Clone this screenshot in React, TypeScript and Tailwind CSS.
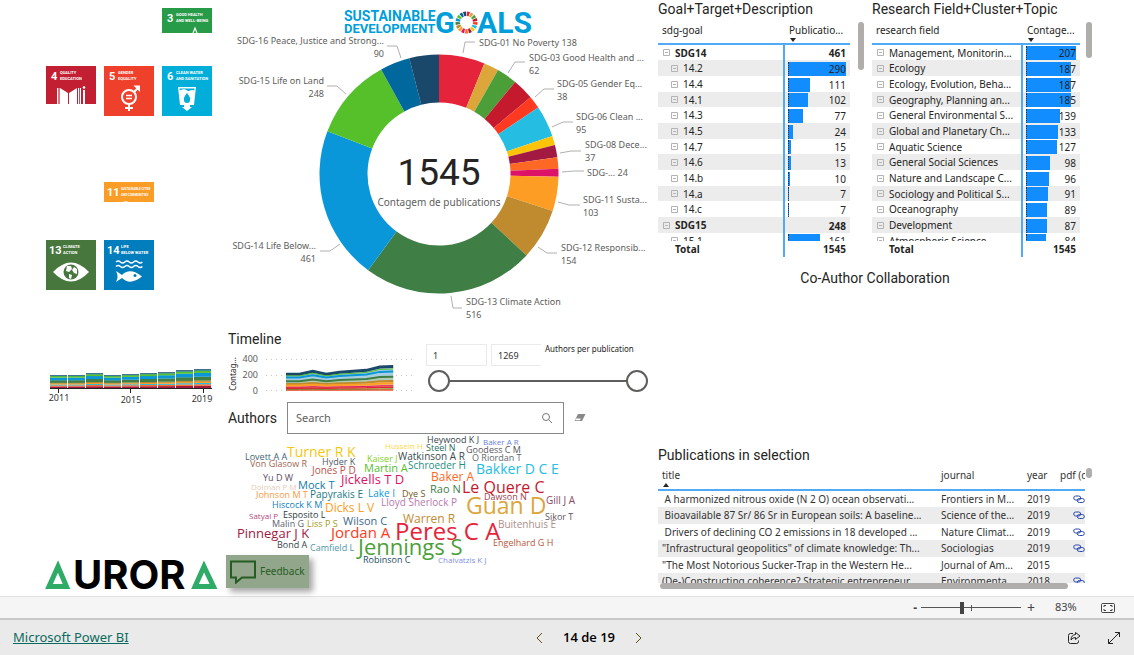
import { useState } from 'react';
import type { ReactNode } from 'react';

interface Slice {
    goal: string;
    value: number;
    color: string;
}

interface Callout {
    x: number;
    y: number;
    anchor: 'start' | 'end';
    lines: string[];
    leader: string;
}

interface FieldRow {
    name: string;
    value: number;
    group?: boolean;
    child?: boolean;
}

interface Publication {
    title: string;
    journal: string;
    year: number;
    pdf: boolean;
}

type Word = [text: string, x: number, y: number, size: number, color: string];

const SLICES: Slice[] = [
    { goal: 'SDG-01', value: 138, color: '#e5243b' },
    { goal: 'SDG-02', value: 45, color: '#dda63a' },
    { goal: 'SDG-03', value: 62, color: '#4c9f38' },
    { goal: 'SDG-04', value: 64, color: '#c5192d' },
    { goal: 'SDG-05', value: 38, color: '#ff3a21' },
    { goal: 'SDG-06', value: 95, color: '#26bde2' },
    { goal: 'SDG-07', value: 28, color: '#fcc30b' },
    { goal: 'SDG-08', value: 37, color: '#a21942' },
    { goal: 'SDG-09', value: 34, color: '#fd6925' },
    { goal: 'SDG-10', value: 24, color: '#dd1367' },
    { goal: 'SDG-11', value: 103, color: '#fd9d24' },
    { goal: 'SDG-12', value: 154, color: '#bf8b2e' },
    { goal: 'SDG-13', value: 516, color: '#3f7e44' },
    { goal: 'SDG-14', value: 461, color: '#0a97d9' },
    { goal: 'SDG-15', value: 248, color: '#56c02b' },
    { goal: 'SDG-16', value: 90, color: '#00689d' },
    { goal: 'SDG-17', value: 89, color: '#19486a' },
];

const CALLOUTS: Callout[] = [
    { x: 384, y: 44, anchor: 'end', lines: ['SDG-16 Peace, Justice and Strong...', '90'], leader: '387,46 397,46 401,58' },
    { x: 324, y: 84, anchor: 'end', lines: ['SDG-15 Life on Land', '248'], leader: '327,86 337,86 346,94' },
    { x: 316, y: 249, anchor: 'end', lines: ['SDG-14 Life Below...', '461'], leader: '320,251 330,251 340,244' },
    { x: 479, y: 46, anchor: 'start', lines: ['SDG-01 No Poverty 138'], leader: '475,42 465,42 463,53' },
    { x: 529, y: 61, anchor: 'start', lines: ['SDG-03 Good Health and ...', '62'], leader: '525,62 515,62 508,73' },
    { x: 557, y: 87, anchor: 'start', lines: ['SDG-05 Gender Eq...', '38'], leader: '554,89 544,89 535,97' },
    { x: 576, y: 120, anchor: 'start', lines: ['SDG-06 Clean ...', '95'], leader: '573,122 563,122 552,127' },
    { x: 585, y: 148, anchor: 'start', lines: ['SDG-08 Dece...', '37'], leader: '581,151 571,151 560,153' },
    { x: 587, y: 176, anchor: 'start', lines: ['SDG-... 24'], leader: '584,171 574,171 562,172' },
    { x: 583, y: 203, anchor: 'start', lines: ['SDG-11 Susta...', '103'], leader: '580,205 569,205 558,202' },
    { x: 561, y: 251, anchor: 'start', lines: ['SDG-12 Responsib...', '154'], leader: '557,253 547,253 538,247' },
    { x: 466, y: 305, anchor: 'start', lines: ['SDG-13 Climate Action', '516'], leader: '462,308 453,308 451,296' },
];

const TARGETS: FieldRow[] = [
    { name: 'SDG14', value: 461, group: true },
    { name: '14.2', value: 290, child: true },
    { name: '14.4', value: 111, child: true },
    { name: '14.1', value: 102, child: true },
    { name: '14.3', value: 77, child: true },
    { name: '14.5', value: 24, child: true },
    { name: '14.7', value: 15, child: true },
    { name: '14.6', value: 13, child: true },
    { name: '14.b', value: 10, child: true },
    { name: '14.a', value: 7, child: true },
    { name: '14.c', value: 7, child: true },
    { name: 'SDG15', value: 248, group: true },
    { name: '15.1', value: 161, child: true },
];

const FIELDS: FieldRow[] = [
    { name: 'Management, Monitorin...', value: 207 },
    { name: 'Ecology', value: 187 },
    { name: 'Ecology, Evolution, Beha...', value: 187 },
    { name: 'Geography, Planning an...', value: 185 },
    { name: 'General Environmental S...', value: 139 },
    { name: 'Global and Planetary Ch...', value: 133 },
    { name: 'Aquatic Science', value: 127 },
    { name: 'General Social Sciences', value: 98 },
    { name: 'Nature and Landscape C...', value: 96 },
    { name: 'Sociology and Political S...', value: 91 },
    { name: 'Oceanography', value: 89 },
    { name: 'Development', value: 87 },
    { name: 'Atmospheric Science', value: 84 },
];

const PUBLICATIONS: Publication[] = [
    { title: ' A harmonized nitrous oxide (N 2 O) ocean observati...', journal: 'Frontiers in M...', year: 2019, pdf: true },
    { title: ' Bioavailable 87 Sr/ 86 Sr in European soils: A baseline...', journal: 'Science of the...', year: 2019, pdf: true },
    { title: ' Drivers of declining CO 2 emissions in 18 developed ...', journal: 'Nature Climat...', year: 2019, pdf: true },
    { title: '"Infrastructural geopolitics" of climate knowledge: Th...', journal: 'Sociologias', year: 2019, pdf: true },
    { title: '"The Most Notorious Sucker-Trap in the Western He...', journal: 'Journal of Am...', year: 2015, pdf: false },
    { title: '(De-)Constructing coherence? Strategic entrepreneur...', journal: 'Environmenta...', year: 2018, pdf: true },
];

const WORDS: Word[] = [
    ['Heywood K J', 427, 443, 9, '#374649'],
    ['Baker A R', 483, 445, 8, '#6b7fdc'],
    ['Hussein H', 385, 449, 8, '#fbd94a'],
    ['Steel N', 426, 451, 9, '#1f6f63'],
    ['Goodess C M', 466, 453, 9, '#5a5560'],
    ['Turner R K', 287, 457, 14, '#f2c80f'],
    ['Lovett A A', 245, 460, 9, '#3f6472'],
    ['Watkinson A R', 398, 460, 10, '#3c4b4e'],
    ['O Riordan T', 472, 461, 9, '#5f6b6d'],
    ['Kaiser J', 367, 462, 9, '#7ed321'],
    ['Von Glasow R', 250, 467, 9, '#a0664f'],
    ['Hyder K', 322, 465, 9, '#4e5a66'],
    ['Jones P D', 312, 474, 10, '#c0504d'],
    ['Martin A', 364, 472, 11, '#56c02b'],
    ['Schroeder H', 408, 469, 10, '#1f8f80'],
    ['Bakker D C E', 476, 474, 14, '#26bde2'],
    ['Jickells T D', 341, 484, 13, '#dd1367'],
    ['Baker A', 431, 481, 12, '#fd6925'],
    ['Yu D W', 263, 481, 9, '#5d4a66'],
    ['Dolman P M', 251, 490, 8, '#e6cdb8'],
    ['Mock T', 298, 489, 11, '#117aa8'],
    ['Rao N', 430, 493, 11, '#3f7e44'],
    ['Le Quere C', 462, 493, 16, '#c5192d'],
    ['Johnson M T', 256, 498, 9, '#f79a45'],
    ['Papyrakis E', 310, 498, 10, '#1b7a86'],
    ['Lake I', 368, 497, 10, '#0a97d9'],
    ['Dye S', 402, 497, 9, '#6f5a1c'],
    ['Dawson N', 484, 500, 9, '#9c4350'],
    ['Lloyd Sherlock P', 381, 506, 10, '#b878b0'],
    ['Guan D', 466, 514, 23, '#dda63a'],
    ['Gill J A', 546, 504, 10, '#8b4a68'],
    ['Hiscock K M', 272, 508, 9, '#147fc4'],
    ['Dicks L V', 325, 512, 12, '#fd9d24'],
    ['Sikor T', 545, 520, 9, '#5e5560'],
    ['Satyal P', 249, 519, 8, '#b3467a'],
    ['Esposito L', 283, 518, 9, '#2c3a3d'],
    ['Wilson C', 343, 525, 11, '#3d6a8a'],
    ['Warren R', 403, 523, 12, '#bf8b2e'],
    ['Malin G', 272, 527, 9, '#5c6470'],
    ['Liss P S', 307, 527, 9, '#a89a15'],
    ['Buitenhuis E', 498, 528, 10, '#ad8f8a'],
    ['Pinnegar J K', 237, 538, 13, '#a21942'],
    ['Jordan A', 331, 538, 15, '#ff3a21'],
    ['Peres C A', 395, 540, 24, '#e5243b'],
    ['Bond A', 277, 548, 9, '#374649'],
    ['Camfield L', 310, 551, 9, '#4f97a8'],
    ['Jennings S', 358, 555, 22, '#4c9f38'],
    ['Engelhard G H', 493, 546, 9, '#b8563c'],
    ['Robinson C', 363, 563, 9, '#1d4e66'],
    ['Chalvatzis K J', 438, 563, 8, '#7f8fe6'],
];

// Distance above the axis for the nine years, 2011 to 2019
const BAR_HEIGHTS = [13, 13, 15, 13, 14, 15, 16, 18, 19];

const BAR_LAYERS = [
    { from: 0, to: 0.12, color: '#a21942' },
    { from: 0.12, to: 0.2, color: '#fd6925' },
    { from: 0.2, to: 0.27, color: '#26bde2' },
    { from: 0.27, to: 0.33, color: '#fd9d24' },
    { from: 0.33, to: 0.4, color: '#bf8b2e' },
    { from: 0.4, to: 0.6, color: '#3f7e44' },
    { from: 0.6, to: 0.8, color: '#0a97d9' },
    { from: 0.8, to: 0.92, color: '#56c02b' },
    { from: 0.92, to: 0.97, color: '#00689d' },
    { from: 0.97, to: 1, color: '#19486a' },
];

const TIMELINE_TOPS = [17, 17, 20, 17, 19, 20, 21, 24.5, 25];

const TIMELINE_LAYERS = [
    { at: 0.96, color: '#19486a', width: 3 },
    { at: 0.86, color: '#56c02b', width: 1 },
    { at: 0.76, color: '#0a97d9', width: 2 },
    { at: 0.55, color: '#3f7e44', width: 2 },
    { at: 0.38, color: '#bf8b2e', width: 2 },
    { at: 0.29, color: '#fd9d24', width: 2 },
    { at: 0.19, color: '#dd1367', width: 1 },
    { at: 0.13, color: '#e5243b', width: 1.5 },
    { at: 0.06, color: '#4c9f38', width: 1 },
    { at: 0.02, color: '#ff3a21', width: 1 },
];

const ringPath = (cx: number, cy: number, outer: number, inner: number, start: number, end: number): string => {
    const point = (radius: number, angle: number) =>
        `${(cx + radius * Math.sin(angle)).toFixed(2)},${(cy - radius * Math.cos(angle)).toFixed(2)}`;
    const large = end - start > Math.PI ? 1 : 0;
    return `M${point(outer, start)} A${outer},${outer} 0 ${large} 1 ${point(outer, end)} L${point(inner, end)} A${inner},${inner} 0 ${large} 0 ${point(inner, start)} Z`;
};

const donutPaths = () => {
    const total = SLICES.reduce((sum, slice) => sum + slice.value, 0);
    let angle = 0;
    return SLICES.map((slice) => {
        const start = angle;
        angle += (slice.value / total) * Math.PI * 2;
        return { ...slice, d: ringPath(439, 174, 119.5, 71.5, start, angle) };
    });
};

const PanelTitle = ({ children }: { children: ReactNode }) => (
    <h2 className="font-['Roboto',sans-serif] text-sm leading-[18px] whitespace-nowrap text-[#252423]">{children}</h2>
);

interface TileProps {
    number: string;
    lines: string[];
    color: string;
    height: number;
    className: string;
    lineSize?: number;
    children?: ReactNode;
}

const GoalTile = ({ number, lines, color, height, className, lineSize = 4, children }: TileProps) => (
    <button type="button" aria-label={`SDG ${number}`} className={`self-start ${className}`}>
        <svg viewBox={`0 0 50 ${height}`} className="block w-full font-['Roboto',sans-serif]">
            <rect width="50" height={height} fill={color} />
            <text x={number.length > 1 ? 3 : 5} y="14" fontSize="11" fontWeight="700" fill="#fff">{number}</text>
            {lines.map((line, i) => (
                <text key={line} x={number.length > 1 ? 17 : 14} y={8 + i * 6} fontSize={lineSize} fontWeight="700" fill="#fff">
                    {line}
                </text>
            ))}
            {children}
        </svg>
    </button>
);

const GoalGrid = () => (
    <div className="ml-[46px] mt-2 grid w-[166px] grid-cols-3 grid-rows-[repeat(5,50px)] gap-2">
        <GoalTile number="3" lines={['GOOD HEALTH', 'AND WELL-BEING']} color="#279b48" height={25} className="col-start-3 row-start-1">
            <path d="M31 25l2-5 2 5" fill="none" stroke="#fff" strokeWidth="1.2" />
        </GoalTile>
        <GoalTile number="4" lines={['QUALITY', 'EDUCATION']} color="#c31f33" height={38} className="col-start-1 row-start-2">
            <path d="M14 22l8 5v11h-8zM31 22l-8 5v11h8zM11 22h1v16h-1zM12.6 22h.8v16h-.8zM32 22h1.200v16H32zM34 22h1v16h-1zM37 24h2v14h-2z" fill="#fff" />
            <circle cx="38" cy="21.500" r="1.300" fill="#fff" />
        </GoalTile>
        <GoalTile number="5" lines={['GENDER', 'EQUALITY']} color="#ef402b" height={50} className="col-start-2 row-start-2">
            <g fill="none" stroke="#fff" strokeWidth="2">
                <circle cx="25" cy="31" r="7" />
                <path d="M25 38v7M21 42h8M30 26l5-5" />
                <path d="M22 29.500h6M22 32.500h6" strokeWidth="1.500" />
            </g>
            <path d="M29.500 19.500H36v6.500l-2-2-3-3z" fill="#fff" />
        </GoalTile>
        <GoalTile number="6" lines={['CLEAN WATER', 'AND SANITATION']} color="#00aed9" height={50} className="col-start-3 row-start-2">
            <path d="M16 21h18l-2 18h-4v2h2l-5 4-5-4h2v-2h-4z" fill="#fff" />
            <path d="M17.500 22.500h15l-.2 2q-2-1-4 0t-4-.5-6.600.5z" fill="#00aed9" />
            <path d="M25 27q4 5 3 7a3 3 0 0 1-6 0q-1-2 3-7z" fill="#00aed9" />
        </GoalTile>
        <GoalTile number="11" lines={['SUSTAINABLE CITIES', 'AND COMMUNITIES']} color="#f99d26" height={20} lineSize={3} className="col-start-2 row-start-4">
            <path d="M18 20l4-.8 3 .8z" fill="#fff" />
        </GoalTile>
        <GoalTile number="13" lines={['CLIMATE', 'ACTION']} color="#48773e" height={50} className="col-start-1 row-start-5">
            <path d="M7 32q18-19 36 0-18 19-36 0z" fill="#fff" />
            <circle cx="25" cy="32" r="7.500" fill="#48773e" />
            <path d="M21 26l4 0 1 3-3 3-3-1zM28 27l3 2 0 5-3-1-2-3zM23 34l3 1-1 4-2-1z" fill="#fff" />
        </GoalTile>
        <GoalTile number="14" lines={['LIFE', 'BELOW WATER']} color="#007dbc" height={50} className="col-start-2 row-start-5">
            <g fill="none" stroke="#fff" strokeWidth="1.400">
                <path d="M12 22q2.200-2 4.400 0t4.400 0 4.400 0 4.400 0 4.400 0 4.400 0" />
                <path d="M12 26.500q2.200-2 4.400 0t4.400 0 4.400 0 4.400 0 4.400 0 4.400 0" />
            </g>
            <path d="M12 31l6 4q8-8 20 1.500-12 9.500-20 1.500l-6 4q3-5.500 0-11z" fill="#fff" />
            <circle cx="31" cy="35.500" r="1.500" fill="#007dbc" />
        </GoalTile>
    </div>
);

const YearBars = () => (
    <svg viewBox="46 366 170 42" className="ml-[46px] mt-[76px] block w-[170px]" role="img" aria-label="Publications per year">
        {BAR_HEIGHTS.map((height, i) =>
            BAR_LAYERS.map((layer) => (
                <rect
                    key={`${i}-${layer.color}`}
                    x={50 + i * 18}
                    y={388 - height * layer.to}
                    width="17"
                    height={height * (layer.to - layer.from) + 0.1}
                    fill={layer.color}
                />
            )),
        )}
        <path d="M50 388.500h162M58.500 388v5M130.500 388v5M203.500 388v5" stroke="#222" fill="none" />
        <g fontSize="9" fill="#333" textAnchor="middle">
            <text x="59" y="401">2011</text>
            <text x="131" y="403">2015</text>
            <text x="202" y="402">2019</text>
        </g>
    </svg>
);

const AuroraLogo = () => (
    <svg viewBox="44 558 174 34" className="ml-11 block w-[174px]" role="img" aria-label="Aurora">
        <g fill="none" stroke="#2eab66" strokeWidth="5">
            <path d="M49 586.500h17.500L58 566.500z" />
            <path d="M195 586.500h18.500L204 566.500z" />
        </g>
        <text x="73" y="589" fontSize="40" fontWeight="700" className="font-['Inter',sans-serif]">UROR</text>
    </svg>
);

const GoalsLogo = () => {
    const step = (Math.PI * 2) / SLICES.length;
    return (
        <g fill="#009edb" fontWeight="700" className="font-['Roboto',sans-serif]">
            <text x="344" y="21" fontSize="14">SUSTAINABLE</text>
            <text x="344" y="33" fontSize="13">DEVELOPMENT</text>
            <text x="435" y="33" fontSize="29">G</text>
            <text x="477" y="33" fontSize="30">ALS</text>
            {SLICES.map((slice, i) => (
                <path key={slice.goal} d={ringPath(466.5, 22.5, 11, 6.5, i * step + 0.04, (i + 1) * step - 0.04)} fill={slice.color} />
            ))}
        </g>
    );
};

const GoalsDonut = () => (
    <svg viewBox="226 0 430 326" className="block w-full" role="img" aria-label="Publications per goal">
        <GoalsLogo />
        {donutPaths().map((slice) => (
            <path key={slice.goal} d={slice.d} fill={slice.color} />
        ))}
        <text x="439" y="185" fontSize="37" fill="#252423" textAnchor="middle" className="font-['Roboto',sans-serif]">1545</text>
        <text x="439" y="206" fontSize="10" fill="#605e5c" textAnchor="middle">Contagem de publications</text>
        {CALLOUTS.map((callout) => (
            <g key={callout.lines[0]}>
                <polyline points={callout.leader} fill="none" stroke="#b3b0ad" />
                {callout.lines.map((line, i) => (
                    <text key={line} x={callout.x} y={callout.y + i * 13} fontSize="9" fill="#605e5c" textAnchor={callout.anchor}>
                        {line}
                    </text>
                ))}
            </g>
        ))}
    </svg>
);

const Timeline = () => {
    const line = (at: number) => TIMELINE_TOPS.map((top, i) => `${286 + i * 13.4},${390.5 - top * at}`).join(' ');
    return (
        <svg viewBox="228 350 188 48" className="block w-[188px]" role="img" aria-label="Timeline">
            <g stroke="#c8c6c4" strokeDasharray="1 4">
                <path d="M266 359.500h146M266 375.500h146M266 390.500h146" />
            </g>
            <polygon points={`${line(0.96)} 393.200,390.500 286,390.500`} fill="#a8cfe0" />
            <polygon points={`${line(0.55)} 393.200,390.500 286,390.500`} fill="#b3cdb4" />
            <polygon points={`${line(0.34)} 393.200,390.500 286,390.500`} fill="#f5b97a" />
            {TIMELINE_LAYERS.map((layer) => (
                <polyline key={layer.color} points={line(layer.at)} fill="none" stroke={layer.color} strokeWidth={layer.width} />
            ))}
            <g fontSize="9" fill="#605e5c" textAnchor="end">
                <text x="258" y="362">400</text>
                <text x="258" y="378">200</text>
                <text x="258" y="394">0</text>
            </g>
            <text fontSize="8" fill="#252423" textAnchor="middle" transform="translate(236 374) rotate(-90)">Contag...</text>
        </svg>
    );
};

const thumbClasses =
    'pointer-events-none absolute inset-0 w-full appearance-none bg-transparent [&::-webkit-slider-thumb]:pointer-events-auto [&::-webkit-slider-thumb]:size-[22px] [&::-webkit-slider-thumb]:appearance-none [&::-webkit-slider-thumb]:rounded-full [&::-webkit-slider-thumb]:border-2 [&::-webkit-slider-thumb]:border-[#605e5c] [&::-webkit-slider-thumb]:bg-white';

const AuthorCountSlicer = () => {
    const [min, setMin] = useState<number>(1);
    const [max, setMax] = useState<number>(1269);

    return (
        <div className="w-[222px]">
            <div className="flex items-start">
                <input
                    aria-label="Minimum authors"
                    value={min}
                    onChange={(e) => setMin(Number(e.target.value) || 1)}
                    className="h-[22px] w-[61px] border border-[#eaeaea] px-1.5 text-[9px] text-[#333] outline-none"
                />
                <input
                    aria-label="Maximum authors"
                    value={max}
                    onChange={(e) => setMax(Number(e.target.value) || 1)}
                    className="ml-1 h-[22px] w-[50px] border border-r-0 border-[#eaeaea] px-1.5 text-[9px] text-[#333] outline-none"
                />
                <span className="ml-1 text-[8px] leading-[10px] whitespace-nowrap text-[#252423]">Authors per publication</span>
            </div>
            <div className="relative ml-0.5 mt-1 h-[22px]">
                <div className="mx-2.5 h-3 border-b-2 border-[#605e5c]" />
                <input type="range" aria-label="From" min="1" max="1269" value={min} onChange={(e) => setMin(Number(e.target.value))} className={thumbClasses} />
                <input type="range" aria-label="To" min="1" max="1269" value={max} onChange={(e) => setMax(Number(e.target.value))} className={thumbClasses} />
            </div>
        </div>
    );
};

const AuthorSearch = () => (
    <div className="mt-1 flex items-center">
        <label htmlFor="author-search" className="w-[59px] font-['Roboto',sans-serif] text-sm text-[#252423]">Authors</label>
        <div className="flex h-8 w-[277px] items-center border border-[#8a8886] pr-2.5">
            <input id="author-search" placeholder="Search" className="min-w-0 flex-1 px-2 text-[11px] outline-none placeholder:text-[#605e5c]" />
            <svg viewBox="0 0 12 12" className="size-3" fill="none" stroke="#777">
                <circle cx="5" cy="5" r="3.500" />
                <path d="M7.500 7.500l3.500 3.500" />
            </svg>
        </div>
        <button type="button" aria-label="Clear selection" className="ml-2.5">
            <svg viewBox="0 0 12 10" className="h-2.5 w-3">
                <path d="M4 1h7.500L8 8H.5z" fill="#8a8886" />
                <path d="M2 5.500h4.800L6 7.300H1.200z" fill="#fff" />
            </svg>
        </button>
    </div>
);

const AuthorCloud = () => (
    <svg viewBox="226 434 430 162" className="block w-full font-['Open_Sans',sans-serif]" role="img" aria-label="Authors">
        {WORDS.map(([text, x, y, size, color]) => (
            <text key={text} x={x} y={y} fontSize={size} fill={color}>{text}</text>
        ))}
    </svg>
);

const ExpandIcon = () => (
    <svg viewBox="0 0 7 7" className="size-[7px] shrink-0" fill="none" stroke="#b3b3b3">
        <path d="M.5.5h6v6h-6zM2 3.500h3" />
    </svg>
);

interface MatrixProps {
    nameLabel: string;
    valueLabel: string;
    rows: FieldRow[];
    nameWidth: string;
}

const MatrixTable = ({ nameLabel, valueLabel, rows, nameWidth }: MatrixProps) => {
    const max = Math.max(...rows.filter((row) => !row.group).map((row) => row.value));
    return (
        <div className="h-[237px] min-w-0 flex-1 overflow-hidden">
            <table className="w-full table-fixed border-separate border-spacing-0 text-[10px] leading-[15px] text-[#252423]">
                <thead>
                    <tr className="text-left align-top">
                        <th className={`h-[25px] border-b-2 border-[#50aaf5] pt-[3px] pl-1 font-normal ${nameWidth}`}>{nameLabel}</th>
                        <th className="border-b-2 border-[#50aaf5] pt-[3px] pl-1 font-normal whitespace-nowrap">
                            {valueLabel}
                            <svg viewBox="0 0 8 4" className="block h-1 w-2"><path d="M1 0h6L4 4z" fill="#252423" /></svg>
                        </th>
                    </tr>
                </thead>
                <tbody>
                    {rows.map((row) => (
                        <tr key={row.name} className={`h-4 even:bg-[#ececec] nth-[3n+1]:h-[15px] ${row.group ? 'font-bold' : ''}`}>
                            <td className="border-r-2 border-[#50aaf5] p-0">
                                <div className={`flex h-[15px] items-center gap-[5px] overflow-hidden whitespace-nowrap ${row.child ? 'pl-[13px]' : 'pl-[5px]'}`}>
                                    <ExpandIcon />
                                    <span className="leading-4">{row.name}</span>
                                </div>
                            </td>
                            <td className="py-0 pr-1 pl-[3px]">
                                <div className="grid h-[15px] items-center">
                                    {!row.group && (
                                        <span
                                            className="col-start-1 row-start-1 h-3.5 border-l border-dotted border-[#333] bg-[#118dff]"
                                            style={{ width: `${(row.value / max) * 100}%` }}
                                        />
                                    )}
                                    <span className="col-start-1 row-start-1 text-right leading-4">{row.value}</span>
                                </div>
                            </td>
                        </tr>
                    ))}
                </tbody>
                <tfoot className="sticky bottom-0 bg-white font-bold">
                    <tr className="h-4">
                        <td className="border-r-2 border-[#50aaf5] bg-white py-0 pl-[17px]">Total</td>
                        <td className="bg-white py-0 pr-1 text-right">1545</td>
                    </tr>
                </tfoot>
            </table>
        </div>
    );
};

const LinkIcon = () => (
    <svg viewBox="0 0 12 9" className="h-[9px] w-3" fill="none" stroke="#2c4bb0">
        <rect x=".7" y="1" width="7" height="4" rx="2" />
        <rect x="4.300" y="3.500" width="7" height="4" rx="2" />
    </svg>
);

const PublicationTable = () => (
    <div className="flex items-start">
        <div className="min-w-0 flex-1">
            <div className="h-[117px] overflow-hidden">
                <table className="w-full table-fixed border-separate border-spacing-0 text-left text-[10px] leading-[15px] whitespace-nowrap text-[#333]">
                    <thead>
                        <tr className="align-top">
                            <th className="h-[25px] border-b-2 border-[#50aaf5] pt-0.5 pl-1 font-normal">
                                title
                                <svg viewBox="0 0 8 4" className="block h-1 w-2"><path d="M1 4h6L4 0z" fill="#252423" /></svg>
                            </th>
                            <th className="w-[86px] border-b-2 border-[#50aaf5] pt-0.5 pl-1 font-normal">journal</th>
                            <th className="w-[33px] border-b-2 border-[#50aaf5] pt-0.5 pl-1 font-normal">year</th>
                            <th className="w-[29px] overflow-hidden border-b-2 border-[#50aaf5] pt-0.5 pl-1 font-normal">pdf (doi)</th>
                        </tr>
                    </thead>
                    <tbody>
                        {PUBLICATIONS.map((item) => (
                            <tr key={item.title} className="h-4 even:h-[17px] even:bg-[#ececec]">
                                <td className="overflow-hidden py-0 pl-1 whitespace-pre">{item.title}</td>
                                <td className="overflow-hidden py-0 pl-1">{item.journal}</td>
                                <td className="py-0 pl-1">{item.year}</td>
                                <td className="p-0">
                                    {item.pdf && (
                                        <a href="#pdf" aria-label="Open pdf" className="flex justify-end"><LinkIcon /></a>
                                    )}
                                </td>
                            </tr>
                        ))}
                    </tbody>
                </table>
            </div>
            <div className="ml-0.5 mr-[17px] h-1.5 rounded-full bg-[#b0aeac]" />
        </div>
        <div className="mt-0.5 ml-px h-2.5 w-1.5 rounded-full bg-[#b0aeac]" />
    </div>
);

const ZoomBar = () => {
    const [zoom, setZoom] = useState<number>(83);
    return (
        <div className="flex h-[22px] items-center justify-end border-t border-[#e1e1e1] bg-[#f5f5f5] pr-[19px] text-[#444]">
            <button type="button" aria-label="Zoom out" className="text-xs leading-4 font-bold">-</button>
            <div className="relative mx-1 flex h-4 w-[100px] items-center">
                <div className="h-px w-full bg-[#555]" />
                <div className="absolute left-1/2 h-1.5 w-px bg-[#555]" />
                <input
                    type="range"
                    aria-label="Zoom"
                    min="0"
                    max="204"
                    value={zoom}
                    onChange={(e) => setZoom(Number(e.target.value))}
                    className="absolute inset-0 w-full appearance-none bg-transparent [&::-webkit-slider-thumb]:h-3 [&::-webkit-slider-thumb]:w-1 [&::-webkit-slider-thumb]:appearance-none [&::-webkit-slider-thumb]:bg-[#444]"
                />
            </div>
            <button type="button" aria-label="Zoom in" className="ml-0.5 text-sm leading-4">+</button>
            <span className="ml-5 w-[46px] text-[11px]">{zoom}%</span>
            <button type="button" aria-label="Fit to page">
                <svg viewBox="0 0 14 10" className="h-2.5 w-3.5" fill="none" stroke="#444">
                    <rect x=".5" y=".5" width="13" height="9" rx="1" />
                    <path d="M3 4V2.500h2M9 2.500h2V4M3 6v1.500h2M9 7.500h2V6" />
                </svg>
            </button>
        </div>
    );
};

const Footer = () => (
    <footer className="grid h-[37px] grid-cols-3 items-center border-t-2 border-[#c8c8c8] bg-[#eaeaea] px-[13px] text-black">
        <a href="#powerbi" className="justify-self-start text-[13px] text-[#0b6a60] underline">Microsoft Power BI</a>
        <nav className="flex items-center justify-center gap-[18px] pl-11">
            <button type="button" aria-label="Previous page">
                <svg viewBox="0 0 10 12" className="h-3 w-2.5" fill="none" stroke="#5c5010"><path d="M7 1L2 6l5 5" /></svg>
            </button>
            <span className="font-['Open_Sans',sans-serif] text-[13px] font-semibold">14 de 19</span>
            <button type="button" aria-label="Next page">
                <svg viewBox="0 0 10 12" className="h-3 w-2.5" fill="none" stroke="#5c5010"><path d="M3 1l5 5-5 5" /></svg>
            </button>
        </nav>
        <div className="flex items-center justify-end gap-[26px]">
            <button type="button" aria-label="Share">
                <svg viewBox="0 0 14 14" className="size-3.5" fill="none" stroke="#222">
                    <path d="M6 2.500H3.500a2 2 0 0 0-2 2v6a2 2 0 0 0 2 2h6a2 2 0 0 0 2-2V9.500" />
                    <path d="M8.500 1.500L13 5 8.500 8.500v-2q-3 0-4.500 2.500 0-5 4.500-5.500z" />
                </svg>
            </button>
            <button type="button" aria-label="Full screen">
                <svg viewBox="0 0 14 14" className="size-3.5" fill="none" stroke="#222">
                    <path d="M1.500 12.500l11-11M8 1.500h4.500V6M1.500 8v4.500H6" />
                </svg>
            </button>
        </div>
    </footer>
);

const App: React.FC = () => (
    <div className="flex min-h-screen flex-col bg-white font-['Noto_Sans',sans-serif]">
        <main className="grid flex-1 grid-cols-[226px_430fr_478fr]">
            <aside className="flex flex-col">
                <GoalGrid />
                <YearBars />
                <div className="mt-auto pb-1">
                    <AuroraLogo />
                </div>
            </aside>

            <section className="relative min-w-0">
                <GoalsDonut />
                <div className="flex items-start pl-0.5">
                    <div className="w-[198px]">
                        <div className="mt-1 mb-0.5">
                            <PanelTitle>Timeline</PanelTitle>
                        </div>
                        <Timeline />
                    </div>
                    <div className="mt-[18px]">
                        <AuthorCountSlicer />
                    </div>
                </div>
                <div className="pl-0.5">
                    <AuthorSearch />
                </div>
                <AuthorCloud />
                <button
                    type="button"
                    className="absolute bottom-2 left-0 flex h-[33px] w-[83px] items-center gap-1 bg-[#92a68c] pl-1 text-[10px] text-[#265c22] shadow-[4px_4px_6px_rgba(0,0,0,0.35)]"
                >
                    <svg viewBox="0 0 26 24" className="h-6 w-[26px] shrink-0" fill="none" stroke="#265c22" strokeWidth="2">
                        <path d="M1 1.500h24v16H12l-6 5v-5H1z" />
                    </svg>
                    Feedback
                </button>
            </section>

            <section className="min-w-0 pl-0.5 pr-[42px]">
                <div className="grid grid-cols-[206fr_220fr] gap-2">
                    <div className="min-w-0">
                        <div className="h-5"><PanelTitle>Goal+Target+Description</PanelTitle></div>
                        <div className="flex items-start">
                            <MatrixTable nameLabel="sdg-goal" valueLabel="Publicatio..." rows={TARGETS} nameWidth="w-[127px]" />
                            <div className="mt-0.5 ml-2 h-12 w-1.5 rounded-full bg-[#b0aeac]" />
                        </div>
                    </div>
                    <div className="min-w-0">
                        <div className="h-5"><PanelTitle>Research Field+Cluster+Topic</PanelTitle></div>
                        <div className="flex items-start">
                            <MatrixTable nameLabel="research field" valueLabel="Contage..." rows={FIELDS} nameWidth="w-[151px]" />
                            <div className="mt-0.5 ml-1.5 h-9 w-1.5 rounded-full bg-[#b0aeac]" />
                        </div>
                    </div>
                </div>
                <div className="mt-3 flex min-h-[177px] justify-center">
                    <PanelTitle>Co-Author Collaboration</PanelTitle>
                </div>
                <div className="mb-0.5"><PanelTitle>Publications in selection</PanelTitle></div>
                <PublicationTable />
            </section>
        </main>
        <ZoomBar />
        <Footer />
    </div>
);

export default App;
